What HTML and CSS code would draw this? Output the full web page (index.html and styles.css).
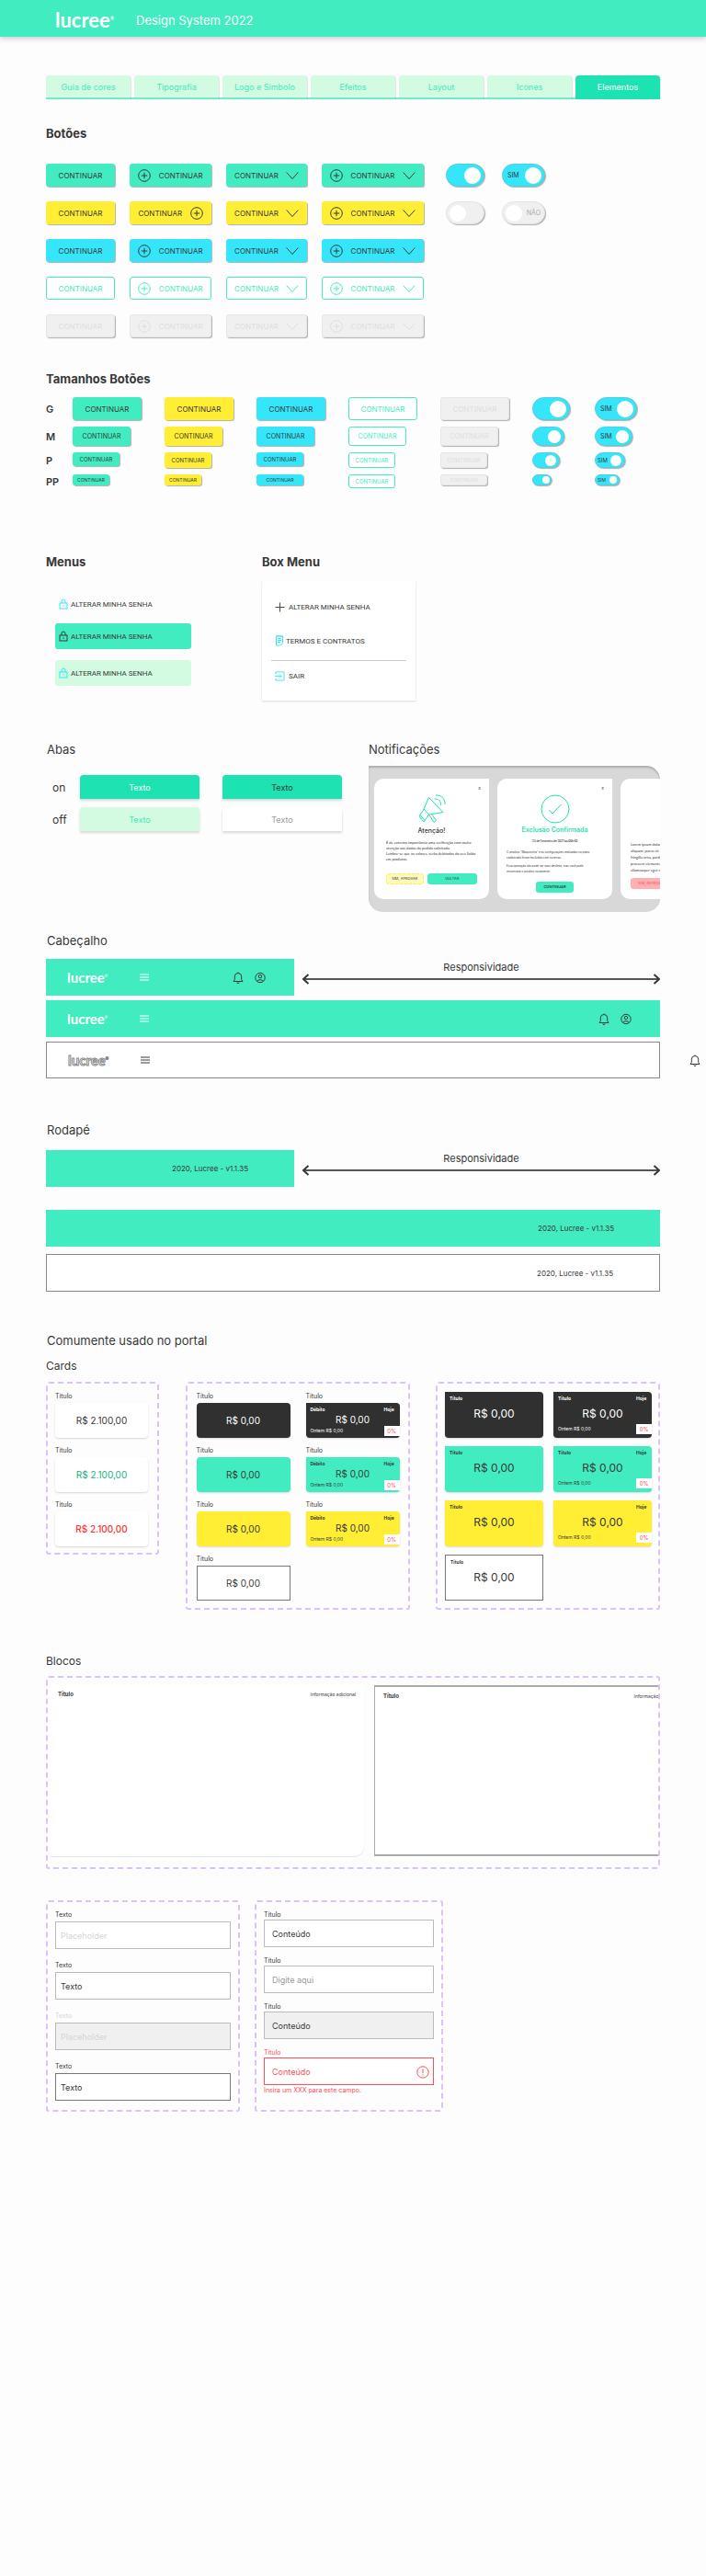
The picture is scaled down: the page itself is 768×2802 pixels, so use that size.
FILE: index.html
```html
<!DOCTYPE html>
<html lang="pt-BR">
<head>
    <meta charset="UTF-8">
    <meta name="viewport" content="width=device-width, initial-scale=1.0">
    <title>Lucree - Design System 2022</title>
    <link rel="stylesheet" href="styles.css">
</head>
<body>
    <!-- icones -->
    <svg class="sprite" aria-hidden="true">
        <symbol id="i-plus" viewBox="0 0 14 14"><circle cx="7" cy="7" r="6.3"/><path d="M7 3.8v6.4M3.8 7h6.4"/></symbol>
        <symbol id="i-down" viewBox="0 0 14 14"><path d="M.7 3.5L7 10.5l6.300-7"/></symbol>
        <symbol id="i-lock" viewBox="0 0 10 12"><rect x="1" y="5" width="8" height="6"/><path d="M3 5V3a2 2 0 0 1 4 0v2M5 7.300v1.500"/></symbol>
        <symbol id="i-cross" viewBox="0 0 12 12"><path d="M6 .5v11M.5 6h11"/></symbol>
        <symbol id="i-doc" viewBox="0 0 10 12"><path d="M1.500 11V1h7v7.500M1.500 1h7M3 3.500h4M3 5.500h4M3 7.500h3M1.500 11h3.500M5.500 10l1 1 2-2.500"/></symbol>
        <symbol id="i-exit" viewBox="0 0 12 12"><path d="M1 3.500V1h10v10H1V8.500M0 6h7.500M5.500 3.800L7.700 6 5.500 8.200"/></symbol>
        <symbol id="i-menu" viewBox="0 0 10 8"><path d="M0 1h10M0 4h10M0 7h10"/></symbol>
        <symbol id="i-bell" viewBox="0 0 12 13"><path d="M1 10.500h10L9.700 8.500V5.200a3.700 3.700 0 0 0-7.400 0v3.300zM6 1.500V.5M4.800 11.500a1.200 1 0 0 0 2.400 0"/></symbol>
        <symbol id="i-user" viewBox="0 0 12 12"><circle cx="6" cy="6" r="5.200"/><circle cx="6" cy="4.600" r="1.700"/><path d="M2.800 9.800c.6-2 5.800-2 6.400 0"/></symbol>
        <symbol id="i-alert" viewBox="0 0 14 14"><circle cx="7" cy="7" r="6.200"/><path d="M7 3.500v4.700M7 9.300v1.200"/></symbol>
        <symbol id="i-check" viewBox="0 0 32 32"><circle cx="16" cy="16" r="15"/><path d="M9.500 17l3.500 4 9.500-10"/></symbol>
        <symbol id="i-horn" viewBox="0 0 32 32"><path d="M12.500 3.500L28 19.500 12.500 22 7 16zM7 16L2 24l5 6 5.500-8M3 22.500l5 6M13 22.500l5 8 2.500-2-5-7M20 1a9 9 0 0 1 10 10M18.500 5a6 6 0 0 1 7 7"/></symbol>
        <symbol id="i-arrow" viewBox="0 0 8 12"><path d="M6.500 1L1 6l5.500 5"/></symbol>
    </svg>

    <header class="topbar">
        <span class="logo">lucree<sup>®</sup></span>
        <span class="topbar-title">Design System 2022</span>
    </header>

    <main>
        <nav class="tabs">
            <a href="#">Guia de cores</a>
            <a href="#">Tipografia</a>
            <a href="#">Logo e Símbolo</a>
            <a href="#">Efeitos</a>
            <a href="#">Layout</a>
            <a href="#">Icones</a>
            <a href="#" class="active">Elementos</a>
        </nav>

        <section class="buttons">
            <h2>Botões</h2>
            <div class="button-grid">
                <button class="btn green">CONTINUAR</button>
                <button class="btn green"><svg><use href="#i-plus"/></svg>CONTINUAR</button>
                <button class="btn green">CONTINUAR<svg><use href="#i-down"/></svg></button>
                <button class="btn green"><svg><use href="#i-plus"/></svg>CONTINUAR<svg><use href="#i-down"/></svg></button>
                <label class="toggle first"><input type="checkbox" aria-label="Ligado" checked></label>
                <label class="toggle text"><span>SIM</span><input type="checkbox" checked></label>

                <button class="btn yellow">CONTINUAR</button>
                <button class="btn yellow">CONTINUAR<svg><use href="#i-plus"/></svg></button>
                <button class="btn yellow">CONTINUAR<svg><use href="#i-down"/></svg></button>
                <button class="btn yellow"><svg><use href="#i-plus"/></svg>CONTINUAR<svg><use href="#i-down"/></svg></button>
                <label class="toggle first off"><input type="checkbox" aria-label="Desligado"></label>
                <label class="toggle text off"><input type="checkbox"><span>NÃO</span></label>

                <button class="btn blue">CONTINUAR</button>
                <button class="btn blue"><svg><use href="#i-plus"/></svg>CONTINUAR</button>
                <button class="btn blue">CONTINUAR<svg><use href="#i-down"/></svg></button>
                <button class="btn blue"><svg><use href="#i-plus"/></svg>CONTINUAR<svg><use href="#i-down"/></svg></button>

                <button class="btn outline row-start">CONTINUAR</button>
                <button class="btn outline"><svg><use href="#i-plus"/></svg>CONTINUAR</button>
                <button class="btn outline">CONTINUAR<svg><use href="#i-down"/></svg></button>
                <button class="btn outline"><svg><use href="#i-plus"/></svg>CONTINUAR<svg><use href="#i-down"/></svg></button>

                <button class="btn disabled row-start" disabled>CONTINUAR</button>
                <button class="btn disabled" disabled><svg><use href="#i-plus"/></svg>CONTINUAR</button>
                <button class="btn disabled" disabled>CONTINUAR<svg><use href="#i-down"/></svg></button>
                <button class="btn disabled" disabled><svg><use href="#i-plus"/></svg>CONTINUAR<svg><use href="#i-down"/></svg></button>
            </div>
        </section>

        <section class="sizes">
            <h2>Tamanhos Botões</h2>
            <div class="size-grid">
                <h3>G</h3>
                <button class="btn green g">CONTINUAR</button>
                <button class="btn yellow g">CONTINUAR</button>
                <button class="btn blue g">CONTINUAR</button>
                <button class="btn outline g">CONTINUAR</button>
                <button class="btn disabled g" disabled>CONTINUAR</button>
                <label class="toggle g"><input type="checkbox" aria-label="Ligado G" checked></label>
                <label class="toggle text g"><span>SIM</span><input type="checkbox" checked></label>

                <h3>M</h3>
                <button class="btn green m">CONTINUAR</button>
                <button class="btn yellow m">CONTINUAR</button>
                <button class="btn blue m">CONTINUAR</button>
                <button class="btn outline m">CONTINUAR</button>
                <button class="btn disabled m" disabled>CONTINUAR</button>
                <label class="toggle m"><input type="checkbox" aria-label="Ligado M" checked></label>
                <label class="toggle text m"><span>SIM</span><input type="checkbox" checked></label>

                <h3>P</h3>
                <button class="btn green p short">CONTINUAR</button>
                <button class="btn yellow p">CONTINUAR</button>
                <button class="btn blue p short">CONTINUAR</button>
                <button class="btn outline p">CONTINUAR</button>
                <button class="btn disabled p" disabled>CONTINUAR</button>
                <label class="toggle p"><input type="checkbox" aria-label="Ligado P" checked></label>
                <label class="toggle text p"><span>SIM</span><input type="checkbox" checked></label>

                <h3>PP</h3>
                <button class="btn green pp">CONTINUAR</button>
                <button class="btn yellow pp">CONTINUAR</button>
                <button class="btn blue pp wide">CONTINUAR</button>
                <button class="btn outline p short">CONTINUAR</button>
                <button class="btn disabled pp wide" disabled>CONTINUAR</button>
                <label class="toggle pp"><input type="checkbox" aria-label="Ligado PP" checked></label>
                <label class="toggle text pp"><span>SIM</span><input type="checkbox" checked></label>
            </div>
        </section>

        <section class="menus">
            <div class="menus-col">
                <h2>Menus</h2>
                <nav class="menu-list">
                    <a href="#" class="plain"><svg><use href="#i-lock"/></svg>ALTERAR MINHA SENHA</a>
                    <a href="#" class="selected"><svg><use href="#i-lock"/></svg>ALTERAR MINHA SENHA</a>
                    <a href="#" class="hover"><svg><use href="#i-lock"/></svg>ALTERAR MINHA SENHA</a>
                </nav>
            </div>
            <div class="box-col">
                <h2>Box Menu</h2>
                <nav class="box-menu">
                    <a href="#"><svg class="dark"><use href="#i-cross"/></svg>ALTERAR MINHA SENHA</a>
                    <a href="#" class="doc"><svg><use href="#i-doc"/></svg>TERMOS E CONTRATOS</a>
                    <hr>
                    <a href="#"><svg><use href="#i-exit"/></svg>SAIR</a>
                </nav>
            </div>
        </section>

        <section class="abas-notif">
            <div class="abas">
                <h2 class="light">Abas</h2>
                <div class="aba-grid">
                    <span>on</span>
                    <button class="aba on">Texto</button>
                    <button class="aba on dark">Texto</button>
                    <span>off</span>
                    <button class="aba off">Texto</button>
                    <button class="aba white">Texto</button>
                </div>
            </div>
            <div class="notif">
                <h2 class="light">Notificações</h2>
                <div class="notif-panel">
                    <article class="notif-card">
                        <button class="close" aria-label="Fechar">x</button>
                        <svg class="notif-icon"><use href="#i-horn"/></svg>
                        <h4>Atenção!</h4>
                        <p>É de extrema importância uma verificação com muita<br>atenção aos dados do pedido solicitado.<br>Lembre-se que os valores, serão debitados do seu Saldo<br>em produtos.</p>
                        <div class="notif-actions">
                            <button class="mini pale">SIM, APROVAR</button>
                            <button class="mini">VOLTAR</button>
                        </div>
                    </article>
                    <article class="notif-card success">
                        <button class="close" aria-label="Fechar">x</button>
                        <svg class="notif-icon"><use href="#i-check"/></svg>
                        <h4>Exclusão Confirmada</h4>
                        <time>23 de Fevereiro de 2021 às 00h40</time>
                        <p>O produto “Maquininha” e as configurações realizadas no plano<br>cadastrado foram excluídas com sucesso.</p>
                        <p>Essa operação não pode ser mais desfeita, mas você pode<br>recontratar o produto novamente.</p>
                        <button class="mini">CONTINUAR</button>
                    </article>
                    <article class="notif-card cut">
                        <p>Lorem ipsum dolor sit amet<br>aliquam, purus sit amet<br>fringilla urna, porttitor<br>praesent elementum<br>ullamcorper eget nulla</p>
                        <button class="mini red">SIM, REPROVAR</button>
                    </article>
                </div>
            </div>
        </section>

        <section class="headers">
            <h2 class="light">Cabeçalho</h2>
            <div class="bars">
                <div class="bar-row">
                    <div class="bar">
                        <span class="logo small">lucree<sup>®</sup></span>
                        <svg class="burger"><use href="#i-menu"/></svg>
                        <span class="bar-icons"><svg><use href="#i-bell"/></svg><svg><use href="#i-user"/></svg></span>
                    </div>
                    <div class="responsive">
                        <span>Responsividade</span>
                        <div class="arrow"><svg><use href="#i-arrow"/></svg><svg class="flip"><use href="#i-arrow"/></svg></div>
                    </div>
                </div>
                <div class="bar">
                    <span class="logo small">lucree<sup>®</sup></span>
                    <svg class="burger"><use href="#i-menu"/></svg>
                    <span class="bar-icons"><svg><use href="#i-bell"/></svg><svg><use href="#i-user"/></svg></span>
                </div>
                <div class="bar bordered">
                    <span class="logo small hollow">lucree<sup>®</sup></span>
                    <svg class="burger"><use href="#i-menu"/></svg>
                    <span class="bar-icons"><svg><use href="#i-bell"/></svg><svg><use href="#i-user"/></svg></span>
                </div>
            </div>
        </section>

        <section class="footers">
            <h2 class="light">Rodapé</h2>
            <div class="bar-row">
                <div class="bar foot">2020, Lucree - v1.1.35</div>
                <div class="responsive">
                    <span>Responsividade</span>
                    <div class="arrow"><svg><use href="#i-arrow"/></svg><svg class="flip"><use href="#i-arrow"/></svg></div>
                </div>
            </div>
            <div class="bar foot full">2020, Lucree - v1.1.35</div>
            <div class="bar foot bordered">2020, Lucree - v1.1.35</div>
        </section>

        <section class="cards">
            <h2 class="light">Comumente usado no portal</h2>
            <h3 class="sub">Cards</h3>
            <div class="card-groups">
                <div class="frame col-one">
                    <div class="item"><span>Título</span><div class="card">R$ 2.100,00</div></div>
                    <div class="item"><span>Título</span><div class="card gain">R$ 2.100,00</div></div>
                    <div class="item"><span>Título</span><div class="card loss">R$ 2.100,00</div></div>
                </div>
                <div class="frame col-two">
                    <div class="item"><span>Título</span><div class="card black">R$ 0,00</div></div>
                    <div class="item"><span>Título</span><div class="card black full"><b>Débito</b><b>Hoje</b><strong>R$ 0,00</strong><small>Ontem R$ 0,00</small><em>0%</em></div></div>
                    <div class="item"><span>Título</span><div class="card green">R$ 0,00</div></div>
                    <div class="item"><span>Título</span><div class="card green full"><b>Débito</b><b>Hoje</b><strong>R$ 0,00</strong><small>Ontem R$ 0,00</small><em>0%</em></div></div>
                    <div class="item"><span>Título</span><div class="card yellow">R$ 0,00</div></div>
                    <div class="item"><span>Título</span><div class="card yellow full"><b>Débito</b><b>Hoje</b><strong>R$ 0,00</strong><small>Ontem R$ 0,00</small><em>0%</em></div></div>
                    <div class="item"><span>Título</span><div class="card lined">R$ 0,00</div></div>
                </div>
                <div class="frame col-big">
                    <div class="card black full"><b>Título</b><strong>R$ 0,00</strong></div>
                    <div class="card black full"><b>Título</b><b>Hoje</b><strong>R$ 0,00</strong><small>Ontem R$ 0,00</small><em>0%</em></div>
                    <div class="card green full"><b>Título</b><strong>R$ 0,00</strong></div>
                    <div class="card green full"><b>Título</b><b>Hoje</b><strong>R$ 0,00</strong><small>Ontem R$ 0,00</small><em>0%</em></div>
                    <div class="card yellow full"><b>Título</b><strong>R$ 0,00</strong></div>
                    <div class="card yellow full"><b></b><b>Hoje</b><strong>R$ 0,00</strong><small>Ontem R$ 0,00</small><em>0%</em></div>
                    <div class="card full lined"><b>Título</b><strong>R$ 0,00</strong></div>
                </div>
            </div>
        </section>

        <section class="blocks">
            <h3 class="sub">Blocos</h3>
            <div class="frame block-frame">
                <div class="block shadow"><b>Título</b><span>Informação adicional</span></div>
                <div class="block line"><b>Título</b><span>Informação adicional</span></div>
            </div>
        </section>

        <section class="forms">
            <form class="frame form-left">
                <label for="t1">Texto</label>
                <input id="t1" type="text" placeholder="Placeholder">
                <label for="t2">Texto</label>
                <input id="t2" type="text" value="Texto">
                <label for="t3" class="muted">Texto</label>
                <input id="t3" type="text" placeholder="Placeholder" disabled>
                <label for="t4">Texto</label>
                <input id="t4" type="text" class="focused" value="Texto">
            </form>
            <form class="frame form-right">
                <label for="c1">Título</label>
                <input id="c1" type="text" value="Conteúdo">
                <label for="c2">Título</label>
                <input id="c2" type="text" placeholder="Digite aqui">
                <label for="c3">Título</label>
                <input id="c3" type="text" value="Conteúdo" class="readonly" readonly>
                <label for="c4" class="error">Título</label>
                <div class="error-field">
                    <input id="c4" type="text" class="error" value="Conteúdo">
                    <svg><use href="#i-alert"/></svg>
                </div>
                <p>Insira um XXX para este campo.</p>
            </form>
        </section>
    </main>
</body>
</html>
```

FILE: styles.css
```css
:root {
    --green: #41ecc0;
    --green-dark: #1de2b1;
    --green-light: #d2fbe1;
    --yellow: #ffee33;
    --blue: #35e6fa;
    --gray: #f0f0f0;
    --text: #383838;
    --red: #ff4d55;
    --frame: #dcc0ff;
    --font: Inter, "Liberation Sans", sans-serif;
}

* {
    box-sizing: border-box;
}

body {
    margin: 0;
    min-height: 100vh;
    background-color: #fdfdfd;
    color: var(--text);
    font-family: var(--font);
    font-size: 9px;
    overflow-x: hidden;
}

h2, h3, h4, p {
    margin: 0;
}

h2 {
    font-size: 13px;
    line-height: 16px;
    font-weight: 700;
}

h2.light {
    font-weight: 400;
    padding-left: 1px;
}

.notif h2.light {
    padding-left: 0;
}

button, input {
    font-family: inherit;
    color: inherit;
}

button {
    cursor: pointer;
}

a {
    color: inherit;
    text-decoration: none;
}

svg {
    fill: none;
    stroke: currentColor;
    flex: none;
}

.sprite {
    display: none;
}

main {
    padding: 0 50px;
}

/* topo */
.topbar {
    display: flex;
    align-items: center;
    gap: 24px;
    height: 40px;
    padding: 4px 60px 0;
    background-color: var(--green);
    color: #fff;
    box-shadow: 0 2px 6px rgba(0, 0, 0, 0.2);
}

.logo {
    font-family: Lato, sans-serif;
    font-size: 22px;
    line-height: 22px;
    font-weight: 700;
}

.logo sup {
    font-size: 5px;
    line-height: 5px;
    vertical-align: 8px;
}

.topbar-title {
    font-size: 13px;
}

/* navegacao */
.tabs {
    display: grid;
    grid-template-columns: repeat(7, 1fr);
    gap: 4px;
    height: 26px;
    margin-top: 42px;
    border-bottom: 2px solid #6fecca;
}

.tabs a {
    display: flex;
    align-items: center;
    justify-content: center;
    height: 26px;
    border-radius: 4px 4px 0 0;
    background-color: var(--green-light);
    color: var(--green);
    border-bottom: 2px solid #6fecca;
    box-shadow: 1px 0 1px rgba(0, 0, 0, 0.1);
}

.tabs a.active {
    background-color: var(--green-dark);
    border-color: var(--green-dark);
    color: #fff;
}

/* botoes */
.buttons {
    margin-top: 29px;
}

.button-grid {
    display: grid;
    grid-template-columns: 75px 89px 88px 111px 42px 47px;
    column-gap: 16px;
    row-gap: 16px;
    margin-top: 25px;
}

.row-start {
    grid-column: 1;
}

.btn {
    display: flex;
    align-items: center;
    justify-content: space-evenly;
    height: 25px;
    padding: 0;
    border: 1px solid transparent;
    border-radius: 3px;
    background-color: var(--green);
    font-size: 8px;
    box-shadow: 1px 1px 1px rgba(0, 0, 0, 0.3);
}

.btn svg {
    width: 14px;
    height: 14px;
}

.btn.yellow {
    background-color: var(--yellow);
}

.btn.blue {
    background-color: var(--blue);
}

.btn.outline {
    background-color: #fff;
    border-color: var(--green);
    color: var(--green);
    box-shadow: none;
}

.btn.disabled {
    background-color: var(--gray);
    border-color: #e6e6e6;
    color: #dedede;
    cursor: default;
}

.toggle {
    display: flex;
    align-items: center;
    justify-content: flex-end;
    height: 25px;
    padding: 0 3px;
    border: 1px solid #57cddb;
    border-radius: 13px;
    background-color: var(--blue);
    font-size: 7px;
    box-shadow: 1px 1px 1px rgba(0, 0, 0, 0.3);
}

.toggle.first {
    margin-left: 8px;
    margin-right: -8px;
}

.button-grid .toggle.text {
    margin-left: 11px;
    margin-right: -11px;
}

.toggle.text {
    justify-content: space-between;
    padding-left: 5px;
}

.toggle input {
    appearance: none;
    width: 18px;
    height: 18px;
    margin: 0;
    border-radius: 50%;
    background-color: #fff;
}

.toggle.off {
    justify-content: flex-start;
    background-color: var(--gray);
    border-color: #e4e4e4;
    color: #aaa;
}

.toggle.text.off {
    justify-content: space-between;
    padding: 0 4px 0 3px;
}

/* tamanhos */
.sizes {
    margin-top: 37px;
}

.size-grid {
    display: grid;
    grid-template-columns: 29px repeat(5, 100px) 68px 46px;
    row-gap: 7px;
    align-items: start;
    margin-top: 12px;
}

.size-grid h3 {
    align-self: center;
    font-size: 11px;
    line-height: 12px;
    font-weight: 600;
}

.btn.g {
    width: 75px;
}

.btn.m {
    width: 63px;
    height: 21px;
    font-size: 7px;
}

.btn.p {
    width: 51px;
    height: 17px;
    font-size: 6px;
}

.btn.pp {
    width: 40px;
    height: 12px;
    font-size: 5px;
}

.btn.short {
    height: 15px;
}

.btn.wide {
    width: 51px;
}

.toggle.g {
    width: 41px;
}

.toggle.text.g {
    width: 46px;
}

.toggle.m {
    width: 35px;
    height: 21px;
}

.toggle.text.m {
    width: 41px;
}

.toggle.m input {
    width: 14px;
    height: 14px;
}

.toggle.p {
    width: 30px;
    height: 17px;
    font-size: 6px;
}

.toggle.text.p {
    width: 33px;
    padding: 0 3px 0 2px;
}

.toggle.p input {
    width: 12px;
    height: 12px;
}

.toggle.pp {
    width: 21px;
    height: 12px;
    padding: 0 1px;
    font-size: 5px;
}

.toggle.text.pp {
    width: 27px;
    padding: 0 2px;
}

.toggle.pp input {
    width: 8px;
    height: 8px;
}

/* menus */
.menus {
    display: flex;
    margin-top: 72px;
    font-family: Roboto, sans-serif;
}

.menus h2 {
    font-family: var(--font);
}

.menus-col {
    width: 235px;
}

.menu-list {
    display: flex;
    flex-direction: column;
    gap: 12px;
    width: 148px;
    margin: 29px 0 0 10px;
}

.menu-list a {
    display: flex;
    align-items: center;
    gap: 3px;
    height: 28px;
    padding-left: 4px;
    border-radius: 3px;
    font-size: 8px;
}

.menu-list a.plain {
    height: 18px;
}

.menu-list svg {
    width: 10px;
    height: 12px;
    color: var(--blue);
}

.menu-list a.selected {
    background-color: var(--green);
}

.menu-list .selected svg {
    color: var(--text);
}

.menu-list a.hover {
    background-color: var(--green-light);
}

.box-menu {
    width: 167px;
    height: 130px;
    margin-top: 13px;
    padding: 19px 10px 0;
    background-color: #fff;
    box-shadow: 0 1px 2px rgba(0, 0, 0, 0.15);
}

.box-menu a {
    display: flex;
    align-items: center;
    gap: 4px;
    height: 18px;
    padding-left: 4px;
    font-size: 8px;
}

.box-menu a.doc {
    gap: 2px;
    margin-top: 19px;
}

.box-menu svg {
    width: 11px;
    height: 11px;
    color: var(--blue);
}

.box-menu .doc svg {
    width: 10px;
    height: 12px;
}

.box-menu svg.dark {
    color: var(--text);
}

.box-menu hr {
    height: 1px;
    margin: 12px 0 7px;
    border: 0;
    background-color: #ccc;
}

/* abas e notificacoes */
.abas-notif {
    display: flex;
    justify-content: space-between;
    margin-top: 45px;
}

.aba-grid {
    display: grid;
    grid-template-columns: 5px 130px 130px;
    column-gap: 25px;
    row-gap: 9px;
    align-items: center;
    margin: 20px 0 0 7px;
    font-size: 12px;
}

.aba-grid span {
    width: 24px;
}

.aba {
    height: 26px;
    padding: 0;
    border: 0;
    border-radius: 4px 4px 0 0;
    background-color: var(--green-dark);
    color: #fff;
    font-size: 9px;
    box-shadow: 0 2px 3px rgba(0, 0, 0, 0.15);
}

.aba.dark {
    color: var(--text);
}

.aba.off {
    background-color: var(--green-light);
    color: var(--green);
}

.aba.white {
    background-color: #fff;
    color: #999;
}

.notif {
    width: 317px;
}

.notif-panel {
    display: flex;
    align-items: flex-start;
    gap: 9px;
    height: 159px;
    margin-top: 10px;
    padding: 14px 0 0 6px;
    border-radius: 0 15px 15px 15px;
    background-color: #d8d8d8;
    box-shadow: inset 0 2px 2px rgba(0, 0, 0, 0.2);
    overflow: hidden;
}

.notif-card {
    position: relative;
    display: flex;
    flex: none;
    flex-direction: column;
    align-items: center;
    width: 125px;
    height: 131px;
    padding: 17px 13px 0;
    border-radius: 10px 0 10px 10px;
    background-color: #fff;
    font-size: 4px;
    line-height: 6px;
}

.notif-card .close {
    position: absolute;
    top: 8px;
    right: 9px;
    padding: 0;
    border: 0;
    background: none;
    font-size: 5px;
    line-height: 5px;
}

.notif-icon {
    width: 32px;
    height: 32px;
    color: var(--green-dark);
}

.notif-card h4 {
    margin-top: 3px;
    font-size: 7px;
    line-height: 10px;
    font-weight: 500;
}

.notif-card p {
    align-self: stretch;
    margin-top: 5px;
    font-family: Lato, sans-serif;
    white-space: nowrap;
}

.notif-actions {
    display: flex;
    gap: 4px;
    align-self: stretch;
    margin-top: 12px;
}

.mini {
    flex: none;
    height: 12px;
    padding: 0 8px;
    border: 0;
    border-radius: 3px;
    background-color: var(--green);
    font-size: 4px;
    line-height: 6px;
}

.notif-actions .mini {
    flex: 1;
}

.mini.pale {
    background-color: #fff9c0;
    border: 1px dashed var(--yellow);
    padding: 0;
}

.mini.red {
    background-color: #ffb0b4;
    color: var(--red);
}

.notif-card.success {
    padding: 17px 10px 0;
    font-size: 3px;
}

.success h4 {
    margin-top: 2px;
    color: var(--green-dark);
    font-weight: 600;
    white-space: nowrap;
}

.success time {
    margin-top: 4px;
    font-weight: 600;
}

.success p {
    margin-top: 3px;
    font-family: var(--font);
}

.success time + p {
    margin-top: 6px;
}

.success .mini {
    margin-top: 8px;
    font-weight: 600;
}

.notif-card.cut {
    align-items: flex-start;
    padding: 63px 11px 0;
    line-height: 7px;
}

.cut .mini {
    margin-top: 5px;
}

/* cabecalho e rodape */
.headers {
    margin-top: 23px;
}

.bars {
    display: flex;
    flex-direction: column;
    gap: 5px;
    margin-top: 12px;
}

.bar-row {
    display: flex;
    gap: 9px;
}

.bar {
    display: flex;
    align-items: center;
    height: 40px;
    padding: 0 31px 0 23px;
    background-color: var(--green);
}

.bar-row .bar {
    width: 270px;
}

.bar.bordered {
    background-color: #fff;
    border: 1px solid #888;
}

.logo.small {
    width: 79px;
    color: #fff;
    font-size: 15px;
    line-height: 16px;
}

.logo.small sup {
    font-size: 4px;
    vertical-align: 6px;
}

.logo.hollow {
    color: #fff;
    -webkit-text-stroke: 1px #888;
}

.burger {
    width: 10px;
    height: 8px;
    color: #fff;
}

.bordered .burger {
    color: var(--text);
}

.bar-icons {
    display: flex;
    gap: 12px;
    margin-left: auto;
}

.bar-icons svg {
    width: 12px;
    height: 13px;
}

/* aqui os icones passam da borda */
.bordered .bar-icons {
    margin-right: -100px;
}

.responsive {
    flex: 1;
    font-size: 11px;
    line-height: 14px;
    text-align: center;
    padding-top: 2px;
}

.arrow {
    display: flex;
    align-items: center;
    justify-content: space-between;
    height: 12px;
    background: linear-gradient(#555, #555) center / calc(100% - 4px) 2px no-repeat;
}

.arrow svg {
    width: 8px;
    height: 12px;
    stroke-width: 2px;
}

.arrow .flip {
    transform: scaleX(-1);
}

.footers {
    margin-top: 48px;
}

.footers .bar-row {
    margin-top: 14px;
}

.bar.foot {
    justify-content: flex-end;
    padding-right: 50px;
    font-size: 8px;
}

.foot.full {
    margin-top: 25px;
}

.foot.bordered {
    height: 41px;
    margin-top: 8px;
}

/* cards */
.cards {
    margin-top: 45px;
}

.sub {
    font-size: 12px;
    line-height: 16px;
    font-weight: 400;
}

.cards .sub {
    margin-top: 12px;
}

.card-groups {
    display: flex;
    align-items: flex-start;
    justify-content: space-between;
    margin-top: 9px;
}

.frame {
    border: 2px dashed var(--frame);
    border-radius: 3px;
}

.col-one {
    width: 123px;
    height: 188px;
    padding: 7px 10px 0 8px;
}

.col-two {
    display: grid;
    grid-template-columns: 102px 102px;
    column-gap: 17px;
    align-content: start;
    height: 248px;
    width: 244px;
    padding: 7px 0 0 10px;
}

.item {
    height: 59px;
    font-size: 7px;
}

.item span {
    display: block;
    line-height: 14px;
}

.card {
    display: flex;
    align-items: center;
    justify-content: center;
    height: 38px;
    border-radius: 4px;
    background-color: #fff;
    font-size: 10px;
    box-shadow: 0 1px 2px rgba(0, 0, 0, 0.15);
}

.card.gain {
    color: #20b080;
}

.card.loss {
    color: #f33;
    font-weight: 500;
}

.card.black {
    background-color: #303030;
    color: #fff;
}

.card.green {
    background-color: var(--green);
}

.card.yellow {
    background-color: var(--yellow);
}

.card.full {
    display: grid;
    grid-template-columns: 1fr auto;
    grid-template-rows: 10px 12px 12px;
    align-items: center;
    align-content: start;
    padding: 2px 0 0 5px;
    border-radius: 0 4px 4px 4px;
}

.card.lined {
    border: 1px solid #777;
    border-radius: 0;
    box-shadow: none;
}

.card b {
    font-size: 5px;
}

.card b + b {
    padding-right: 5px;
}

.card strong {
    grid-column: 1 / 3;
    font-weight: 400;
    text-align: center;
    padding-right: 5px;
}

.card small {
    font-size: 5px;
}

.card em {
    width: 17px;
    height: 11px;
    background-color: #fff;
    color: var(--red);
    font-size: 6px;
    line-height: 11px;
    font-style: normal;
    text-align: center;
}

.col-big {
    display: grid;
    grid-template-columns: 107px 107px;
    gap: 9px 11px;
    align-content: start;
    width: 244px;
    height: 248px;
    padding: 9px 0 0 8px;
}

.col-big .card {
    height: 50px;
    grid-template-rows: 10px 22px 12px;
    font-size: 12px;
}

/* blocos */
.blocks {
    margin-top: 48px;
}

.block-frame {
    display: flex;
    gap: 11px;
    height: 210px;
    margin-top: 8px;
    padding: 8px 0 0 2px;
    overflow: hidden;
}

.block {
    display: flex;
    flex: none;
    justify-content: space-between;
    width: 342px;
    height: 186px;
    padding: 6px 9px 0;
    background-color: #fff;
    font-size: 5px;
    line-height: 8px;
}

.block b {
    font-size: 6px;
}

.block.shadow {
    border-radius: 2px 2px 10px 2px;
    box-shadow: 0 1px 1px rgba(0, 0, 0, 0.1);
}

.block.line {
    border: 1px solid #aaa;
    border-width: 2px 1px;
}

/* formularios */
.forms {
    display: flex;
    align-items: flex-start;
    gap: 16px;
    margin-top: 34px;
}

.form-left {
    width: 211px;
    height: 230px;
    padding: 7px 8px 0;
}

.form-right {
    width: 205px;
    height: 230px;
    padding: 8px 8px 0;
}

.forms label {
    display: block;
    height: 14px;
    font-size: 7px;
    line-height: 14px;
}

.form-right label {
    height: 11px;
    line-height: 11px;
}

.forms input {
    display: block;
    width: 100%;
    height: 30px;
    margin: 0 0 11px;
    padding: 0 5px;
    border: 1px solid #bbb;
    border-radius: 0;
    background-color: #fff;
    font-size: 9px;
}

.form-right input {
    margin-bottom: 9px;
    padding: 0 8px;
}

.forms ::placeholder {
    color: #d5d5d5;
    opacity: 1;
}

.form-right ::placeholder {
    color: #999;
}

.forms .muted {
    color: #d5d5d5;
}

.forms input:disabled,
.forms .readonly {
    background-color: var(--gray);
}

.forms .focused {
    border-color: #777;
}

.forms .error,
.error-field,
.form-right p {
    color: var(--red);
    border-color: var(--red);
}

.error-field {
    position: relative;
}

.error-field input {
    margin: 0;
}

.error-field svg {
    position: absolute;
    top: 9px;
    right: 5px;
    width: 14px;
    height: 14px;
}

.form-right p {
    font-size: 7px;
    line-height: 12px;
}
```
